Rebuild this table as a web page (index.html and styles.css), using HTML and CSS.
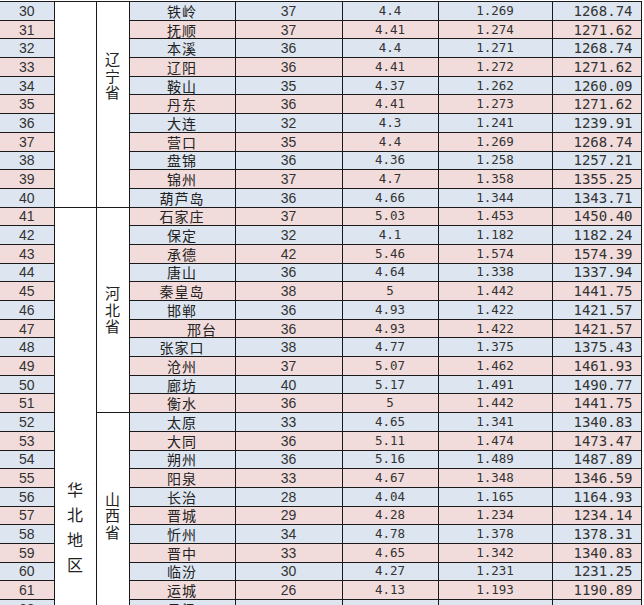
FILE: index.html
```html
<!DOCTYPE html>
<html lang="zh-CN">
<head>
<meta charset="utf-8">
<title>城市数据表</title>
<link rel="stylesheet" href="styles.css">
</head>
<body>
<table class="sheet">
  <colgroup>
    <col class="c-no"><col class="c-region"><col class="c-prov"><col class="c-city">
    <col class="c-a"><col class="c-b"><col class="c-c"><col class="c-d">
  </colgroup>
  <tbody>
    <tr class="even"><td class="no">30</td><td class="region" rowspan="11"></td><td class="prov prov-ln" rowspan="11"><div class="vert">辽宁省</div></td><td class="city">铁岭</td><td class="a">37</td><td class="b">4.4</td><td class="c">1.269</td><td class="d">1268.74</td></tr>
    <tr class="odd"><td class="no">31</td><td class="city">抚顺</td><td class="a">37</td><td class="b">4.41</td><td class="c">1.274</td><td class="d">1271.62</td></tr>
    <tr class="even"><td class="no">32</td><td class="city">本溪</td><td class="a">36</td><td class="b">4.4</td><td class="c">1.271</td><td class="d">1268.74</td></tr>
    <tr class="odd"><td class="no">33</td><td class="city">辽阳</td><td class="a">36</td><td class="b">4.41</td><td class="c">1.272</td><td class="d">1271.62</td></tr>
    <tr class="even"><td class="no">34</td><td class="city">鞍山</td><td class="a">35</td><td class="b">4.37</td><td class="c">1.262</td><td class="d">1260.09</td></tr>
    <tr class="odd"><td class="no">35</td><td class="city">丹东</td><td class="a">36</td><td class="b">4.41</td><td class="c">1.273</td><td class="d">1271.62</td></tr>
    <tr class="even"><td class="no">36</td><td class="city">大连</td><td class="a">32</td><td class="b">4.3</td><td class="c">1.241</td><td class="d">1239.91</td></tr>
    <tr class="odd"><td class="no">37</td><td class="city">营口</td><td class="a">35</td><td class="b">4.4</td><td class="c">1.269</td><td class="d">1268.74</td></tr>
    <tr class="even"><td class="no">38</td><td class="city">盘锦</td><td class="a">36</td><td class="b">4.36</td><td class="c">1.258</td><td class="d">1257.21</td></tr>
    <tr class="odd"><td class="no">39</td><td class="city">锦州</td><td class="a">37</td><td class="b">4.7</td><td class="c">1.358</td><td class="d">1355.25</td></tr>
    <tr class="even"><td class="no">40</td><td class="city">葫芦岛</td><td class="a">36</td><td class="b">4.66</td><td class="c">1.344</td><td class="d">1343.71</td></tr>

    <tr class="odd"><td class="no">41</td><td class="region region-hb" rowspan="22"><div class="vert big">华北地区</div></td><td class="prov" rowspan="11"><div class="vert">河北省</div></td><td class="city">石家庄</td><td class="a">37</td><td class="b">5.03</td><td class="c">1.453</td><td class="d">1450.40</td></tr>
    <tr class="even"><td class="no">42</td><td class="city">保定</td><td class="a">32</td><td class="b">4.1</td><td class="c">1.182</td><td class="d">1182.24</td></tr>
    <tr class="odd"><td class="no">43</td><td class="city">承德</td><td class="a">42</td><td class="b">5.46</td><td class="c">1.574</td><td class="d">1574.39</td></tr>
    <tr class="even"><td class="no">44</td><td class="city">唐山</td><td class="a">36</td><td class="b">4.64</td><td class="c">1.338</td><td class="d">1337.94</td></tr>
    <tr class="odd"><td class="no">45</td><td class="city">秦皇岛</td><td class="a">38</td><td class="b">5</td><td class="c">1.442</td><td class="d">1441.75</td></tr>
    <tr class="even"><td class="no">46</td><td class="city">邯郸</td><td class="a">36</td><td class="b">4.93</td><td class="c">1.422</td><td class="d">1421.57</td></tr>
    <tr class="odd"><td class="no">47</td><td class="city shift">邢台</td><td class="a">36</td><td class="b">4.93</td><td class="c">1.422</td><td class="d">1421.57</td></tr>
    <tr class="even"><td class="no">48</td><td class="city">张家口</td><td class="a">38</td><td class="b">4.77</td><td class="c">1.375</td><td class="d">1375.43</td></tr>
    <tr class="odd"><td class="no">49</td><td class="city">沧州</td><td class="a">37</td><td class="b">5.07</td><td class="c">1.462</td><td class="d">1461.93</td></tr>
    <tr class="even"><td class="no">50</td><td class="city">廊坊</td><td class="a">40</td><td class="b">5.17</td><td class="c">1.491</td><td class="d">1490.77</td></tr>
    <tr class="odd"><td class="no">51</td><td class="city">衡水</td><td class="a">36</td><td class="b">5</td><td class="c">1.442</td><td class="d">1441.75</td></tr>

    <tr class="even"><td class="no">52</td><td class="prov" rowspan="11"><div class="vert">山西省</div></td><td class="city">太原</td><td class="a">33</td><td class="b">4.65</td><td class="c">1.341</td><td class="d">1340.83</td></tr>
    <tr class="odd"><td class="no">53</td><td class="city">大同</td><td class="a">36</td><td class="b">5.11</td><td class="c">1.474</td><td class="d">1473.47</td></tr>
    <tr class="even"><td class="no">54</td><td class="city">朔州</td><td class="a">36</td><td class="b">5.16</td><td class="c">1.489</td><td class="d">1487.89</td></tr>
    <tr class="odd"><td class="no">55</td><td class="city">阳泉</td><td class="a">33</td><td class="b">4.67</td><td class="c">1.348</td><td class="d">1346.59</td></tr>
    <tr class="even"><td class="no">56</td><td class="city">长治</td><td class="a">28</td><td class="b">4.04</td><td class="c">1.165</td><td class="d">1164.93</td></tr>
    <tr class="odd"><td class="no">57</td><td class="city">晋城</td><td class="a">29</td><td class="b">4.28</td><td class="c">1.234</td><td class="d">1234.14</td></tr>
    <tr class="even"><td class="no">58</td><td class="city">忻州</td><td class="a">34</td><td class="b">4.78</td><td class="c">1.378</td><td class="d">1378.31</td></tr>
    <tr class="odd"><td class="no">59</td><td class="city">晋中</td><td class="a">33</td><td class="b">4.65</td><td class="c">1.342</td><td class="d">1340.83</td></tr>
    <tr class="even"><td class="no">60</td><td class="city">临汾</td><td class="a">30</td><td class="b">4.27</td><td class="c">1.231</td><td class="d">1231.25</td></tr>
    <tr class="odd"><td class="no">61</td><td class="city">运城</td><td class="a">26</td><td class="b">4.13</td><td class="c">1.193</td><td class="d">1190.89</td></tr>
    <tr class="even"><td class="no">62</td><td class="city">吕梁</td><td class="a"></td><td class="b"></td><td class="c"></td><td class="d"></td></tr>
  </tbody>
</table>
</body>
</html>
```

FILE: styles.css
```css
html, body {
  margin: 0;
  padding: 0;
  background: #ffffff;
}

body {
  overflow: hidden;
  font-family: "Liberation Sans", Arial, sans-serif;
  color: #2b2b2b;
}

.sheet {
  margin-top: 1px;
  width: 641px;
  table-layout: fixed;
  border-collapse: collapse;
  border-top: 1px solid #1a1a1a;
}

.c-no { width: 54px; }
.c-region { width: 42px; }
.c-prov { width: 33px; }
.c-city { width: 106px; }
.c-a { width: 107px; }
.c-b { width: 96px; }
.c-c { width: 114px; }
.c-d { width: 89px; }

.sheet tr {
  height: 17.7px;
}

.sheet td {
  border: 1px solid #1a1a1a;
  padding: 0;
  height: 17.7px;
  line-height: 16px;
  text-align: center;
  white-space: nowrap;
}

.sheet td.no {
  border-left: none;
}

.even td { background: #dce5f0; }
.odd td { background: #f2dcdb; }

.sheet td.region,
.sheet td.prov {
  background: #ffffff;
  white-space: normal;
}

.no, .a {
  font-family: "Liberation Sans", Arial, sans-serif;
  font-size: 14px;
  color: #333;
}

.city {
  font-family: "Noto Sans CJK SC", sans-serif;
  font-size: 14px;
  letter-spacing: 1px;
  color: #222;
}

.city.shift {
  padding-left: 40px;
}

.b, .c {
  font-family: "DejaVu Sans Mono", monospace;
  font-size: 12.5px;
  color: #333;
}

.sheet td.d {
  font-family: "DejaVu Sans Mono", monospace;
  font-size: 14px;
  color: #333;
  text-align: right;
  padding-right: 8px;
}

.vert {
  width: 1em;
  margin: 0 auto;
  font-family: "Noto Sans CJK SC", sans-serif;
  font-size: 15px;
  line-height: 16.5px;
  color: #222;
}

.vert.big {
  font-size: 16px;
  line-height: 25px;
}

.sheet td.prov-ln {
  vertical-align: top;
  padding-top: 49px;
}

.sheet td.region-hb {
  vertical-align: top;
  padding-top: 269px;
}
```
